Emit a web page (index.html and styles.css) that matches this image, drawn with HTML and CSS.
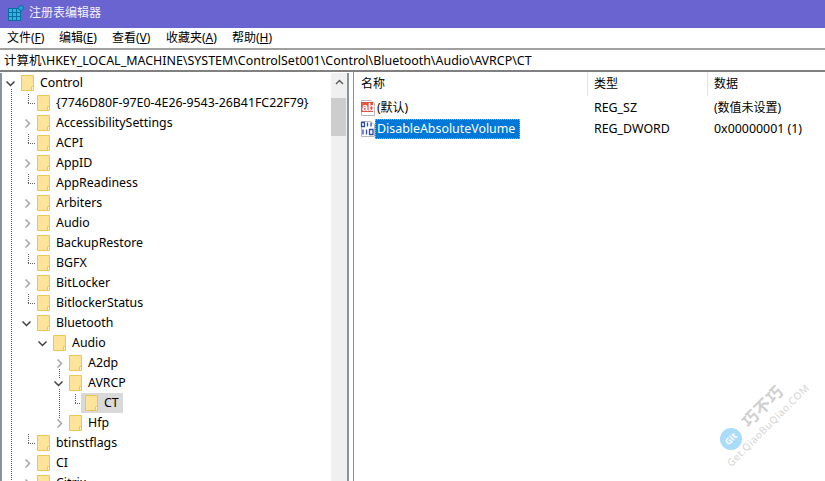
FILE: index.html
```html
<!DOCTYPE html>
<html lang="zh-CN">
<head>
<meta charset="utf-8">
<title>注册表编辑器</title>
<link rel="stylesheet" href="styles.css">
</head>
<body>
<svg class="defs" width="0" height="0" aria-hidden="true">
  <symbol id="folder" viewBox="0 0 16 16">
    <path d="M1.500 .5H13.500V15.500H1.500Z" fill="#fde49a" stroke="#eec552"/>
    <path d="M11.500 15.500V11.500H13.500V15.500Z" fill="#fff3c8" stroke="#eec552"/>
  </symbol>
  <symbol id="down" viewBox="0 0 9 9"><path d="M.5 2.500L4.500 6.500L8.500 2.500" fill="none" stroke="#404040" stroke-width="1.500"/></symbol>
  <symbol id="right" viewBox="0 0 9 9"><path d="M3.500 .5L7.500 4.500L3.500 8.500" fill="none" stroke="#a6a6a6" stroke-width="1.500"/></symbol>
</svg>
<div class="window">
  <header class="titlebar">
    <svg class="appicon" viewBox="0 0 16 16" width="16" height="16">
      <path d="M0 3H13V16H0Z" fill="#0b6f9e"/>
      <path d="M1 4h3v3h-3zM5 4h3v3h-3zM9 4h3v3h-3zM1 8h3v3h-3zM5 8h3v3h-3zM9 8h3v3h-3zM1 12h3v3h-3zM5 12h3v3h-3zM9 12h3v3h-3z" fill="#2fb4e6"/>
      <circle cx="13" cy="3" r="2.500" fill="#1fa6d6" stroke="#0b6f9e"/>
    </svg>
    <span>注册表编辑器</span>
  </header>
  <nav class="menubar">
    <span class="m1">文件(<u>F</u>)</span><span class="m2">编辑(<u>E</u>)</span><span class="m3">查看(<u>V</u>)</span><span class="m4">收藏夹(<u>A</u>)</span><span>帮助(<u>H</u>)</span>
  </nav>
  <div class="address">计算机\HKEY_LOCAL_MACHINE\SYSTEM\ControlSet001\Control\Bluetooth\Audio\AVRCP\CT</div>
  <main class="panes">
    <section class="tree">
      <div class="tree-list">
        <div class="row l0"><svg class="tw"><use href="#down"/></svg><svg class="fd"><use href="#folder"/></svg><span class="lb">Control</span></div>
        <div class="row l1"><i class="tick"></i><svg class="fd"><use href="#folder"/></svg><span class="lb">{7746D80F-97E0-4E26-9543-26B41FC22F79}</span></div>
        <div class="row l1"><svg class="tw"><use href="#right"/></svg><svg class="fd"><use href="#folder"/></svg><span class="lb">AccessibilitySettings</span></div>
        <div class="row l1"><i class="tick"></i><svg class="fd"><use href="#folder"/></svg><span class="lb">ACPI</span></div>
        <div class="row l1"><svg class="tw"><use href="#right"/></svg><svg class="fd"><use href="#folder"/></svg><span class="lb">AppID</span></div>
        <div class="row l1"><i class="tick"></i><svg class="fd"><use href="#folder"/></svg><span class="lb">AppReadiness</span></div>
        <div class="row l1"><svg class="tw"><use href="#right"/></svg><svg class="fd"><use href="#folder"/></svg><span class="lb">Arbiters</span></div>
        <div class="row l1"><svg class="tw"><use href="#right"/></svg><svg class="fd"><use href="#folder"/></svg><span class="lb">Audio</span></div>
        <div class="row l1"><svg class="tw"><use href="#right"/></svg><svg class="fd"><use href="#folder"/></svg><span class="lb">BackupRestore</span></div>
        <div class="row l1"><i class="tick"></i><svg class="fd"><use href="#folder"/></svg><span class="lb">BGFX</span></div>
        <div class="row l1"><svg class="tw"><use href="#right"/></svg><svg class="fd"><use href="#folder"/></svg><span class="lb">BitLocker</span></div>
        <div class="row l1"><i class="tick"></i><svg class="fd"><use href="#folder"/></svg><span class="lb">BitlockerStatus</span></div>
        <div class="row l1"><svg class="tw"><use href="#down"/></svg><svg class="fd"><use href="#folder"/></svg><span class="lb">Bluetooth</span></div>
        <div class="row l2"><svg class="tw"><use href="#down"/></svg><svg class="fd"><use href="#folder"/></svg><span class="lb">Audio</span></div>
        <div class="row l3 vl-b"><svg class="tw"><use href="#right"/></svg><svg class="fd"><use href="#folder"/></svg><span class="lb">A2dp</span></div>
        <div class="row l3 vl"><svg class="tw"><use href="#down"/></svg><svg class="fd"><use href="#folder"/></svg><span class="lb">AVRCP</span></div>
        <div class="row l4 vl"><i class="tick tick-ct"></i><span class="sel"><svg class="fd"><use href="#folder"/></svg><span class="lb">CT</span></span></div>
        <div class="row l3 vl-t"><svg class="tw"><use href="#right"/></svg><svg class="fd"><use href="#folder"/></svg><span class="lb">Hfp</span></div>
        <div class="row l1"><i class="tick"></i><svg class="fd"><use href="#folder"/></svg><span class="lb">btinstflags</span></div>
        <div class="row l1"><svg class="tw"><use href="#right"/></svg><svg class="fd"><use href="#folder"/></svg><span class="lb">CI</span></div>
        <div class="row l1"><svg class="tw"><use href="#right"/></svg><svg class="fd"><use href="#folder"/></svg><span class="lb">Citrix</span></div>
      </div>
      <div class="scrollbar">
        <svg class="arrow" viewBox="0 0 9 6" width="9" height="6"><path d="M1 5L4.500 1.500L8 5" fill="none" stroke="#606060" stroke-width="1.500"/></svg>
        <div class="thumb"></div>
      </div>
    </section>
    <section class="values">
      <div class="heads">
        <div class="h h1">名称</div><div class="h h2">类型</div><div class="h h3">数据</div>
      </div>
      <div class="vrow">
        <div class="c1">
          <svg class="vi" viewBox="0 0 16 16" width="16" height="16"><path d="M1.500 .5H11L14.500 4V15.500H1.500Z" fill="#fff" stroke="#b8b8b8"/><rect x="1" y="2" width="12" height="10" fill="#e2553a"/></svg>
          <span class="ab">ab</span>
          <span class="nm">(默认)</span>
        </div>
        <div class="c2 latin">REG_SZ</div><div class="c3">(数值未设置)</div>
      </div>
      <div class="vrow">
        <div class="c1">
          <svg class="vi" viewBox="0 0 16 16" width="16" height="16"><path d="M1.500 .5H11L14.500 4V15.500H1.500Z" fill="#fff" stroke="#b8b8b8"/><path d="M1.500 1.500h3v4h-3zM7.500 1.500v4M11 1.500v4M3 8.500v5M6.500 8.500v5M9.500 8.500h3.500v5h-3.500z" fill="none" stroke="#2b4fa8" stroke-width="1.300"/></svg>
          <span class="nm picked latin">DisableAbsoluteVolume</span>
        </div>
        <div class="c2 latin">REG_DWORD</div><div class="c3 latin">0x00000001 (1)</div>
      </div>
    </section>
  </main>
  <aside class="mark">
    <span class="badge">Git</span>
    <span class="cn">巧不巧</span>
    <span class="url">Get.QiaoBuQiao.COM</span>
  </aside>
</div>
</body>
</html>
```
FILE: styles.css
```css
* { box-sizing: border-box; }
html, body { margin: 0; padding: 0; }
body { width: 825px; height: 481px; overflow: hidden; background: #fff; color: #000; font: 12px/16px "Noto Sans", "Noto Sans CJK SC", sans-serif; }
.defs { position: absolute; }
.window { position: relative; width: 825px; height: 481px; overflow: hidden; display: flex; flex-direction: column; }
.titlebar { height: 28px; background: #6a64d0; color: #f2f2fb; display: flex; align-items: center; gap: 5px; padding: 0 0 2px 8px; }
.menubar { height: 20px; display: flex; padding-left: 7px; align-items: center; background: #fff; }
.m1 { width: 52px; }
.m2 { width: 53px; }
.m3 { width: 54px; }
.m4 { width: 66px; }
.address { height: 24px; border-top: 2px solid #a0a0a0; border-bottom: 2px solid #808080; padding: 2px 0 0 4px; font-size: 12.45px; line-height: 17px; white-space: nowrap; }
.panes { flex: 1; min-height: 0; display: flex; }
.tree { width: 349px; margin-top: 1px; border-left: 2px solid #8a929c; border-right: 2px solid #8a929c; display: flex; overflow: hidden; }
.tree-list { flex: 1; background: repeating-linear-gradient(to bottom, #606060 0 1px, transparent 1px 2px) 9px 8px / 1px 400px no-repeat; }
.row { height: 20px; display: flex; align-items: center; white-space: nowrap; }
.l0 { padding-left: 4px; }
.l1 { padding-left: 20px; }
.l2 { padding-left: 36px; }
.l3 { padding-left: 52px; }
.l4 { padding-left: 68px; }
.vl, .vl-b, .vl-t { background-image: repeating-linear-gradient(to bottom, #606060 0 1px, transparent 1px 2px); background-repeat: no-repeat; }
.vl { background-position: 57px 0; background-size: 1px 20px; }
.vl-b { background-position: 57px 10px; background-size: 1px 10px; }
.vl-t { background-position: 57px 0; background-size: 1px 10px; }
.tw { width: 9px; height: 9px; margin-right: 5px; flex: none; background: #fff; }
.tick { position: relative; width: 7px; height: 1px; margin: 0 1px 0 6px; flex: none; background: repeating-linear-gradient(to right, #606060 0 1px, transparent 1px 2px); }
.tick::before { content: ""; position: absolute; left: 0; bottom: 0; width: 1px; height: 10px; background: repeating-linear-gradient(to bottom, #606060 0 1px, transparent 1px 2px); }
.tick-ct { width: 6px; margin: 0 0 0 5px; }
.fd { width: 16px; height: 16px; flex: none; }
.lb { margin-left: 4px; font-size: 12.35px; }
.sel { display: inline-flex; align-items: center; height: 20px; background: #d9d9d9; padding: 0 4px 0 3px; }
.scrollbar { width: 16px; background: #f0f0f0; display: flex; flex-direction: column; align-items: center; padding-top: 6px; }
.thumb { width: 15px; height: 38px; margin-top: 13px; margin-left: -1px; background: #cdcdcd; }
.values { flex: 1; min-width: 0; margin-left: 4px; border-left: 1px solid #8a929c; }
.heads { display: flex; height: 25px; line-height: 24px; }
.h { padding-left: 6px; border-right: 1px solid #e5e5e5; height: 24px; }
.h1 { width: 234px; padding-left: 7px; }
.h2 { width: 120px; }
.h3 { flex: 1; border-right: 0; }
.vrow { display: flex; height: 21px; align-items: center; }
.c1 { width: 234px; padding-left: 6px; display: flex; align-items: center; position: relative; }
.c2 { width: 120px; padding-left: 6px; }
.c3 { flex: 1; padding-left: 6px; }
.latin { font-size: 12.4px; }
.vi { flex: none; }
.ab { position: absolute; left: 8px; top: 0; color: #fff; font-family: "Liberation Sans", sans-serif; font-size: 11px; font-weight: bold; line-height: 14px; }
.nm { margin-left: 1px; }
.picked { background: #0078d7; color: #fff; outline: 1px dotted #e8a040; outline-offset: -1px; padding: 2px 5px 2px 2px; margin-left: -1px; line-height: 16px; }
.mark { position: absolute; left: 715px; top: 375px; width: 110px; height: 106px; pointer-events: none; }
.badge { position: absolute; left: 5px; top: 53px; width: 22px; height: 22px; border-radius: 50%; background: #a9dcf8; color: #fff; font-size: 9px; font-weight: bold; line-height: 22px; text-align: center; transform: rotate(-45deg); }
.cn { position: absolute; left: 22px; top: 21px; color: #cfcfcf; font-size: 16px; font-weight: bold; letter-spacing: 1px; line-height: 20px; white-space: nowrap; transform: rotate(-45deg); }
.url { position: absolute; left: -3px; top: 42px; color: #d4d4d4; font-size: 10px; letter-spacing: .6px; white-space: nowrap; transform: rotate(-45deg); }
```
